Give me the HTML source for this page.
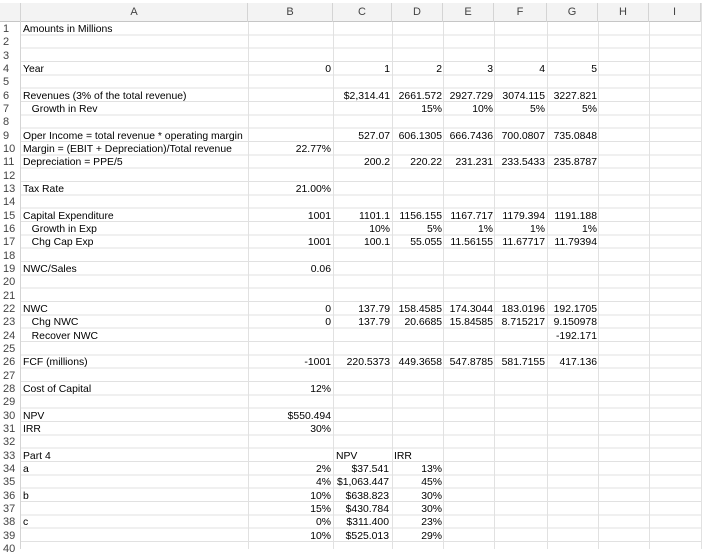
<!DOCTYPE html>
<html><head><meta charset="utf-8"><style>
*{margin:0;padding:0;box-sizing:border-box}
body{width:718px;height:549px;background:#fff;position:relative;overflow:hidden;font-family:"Liberation Sans",Arial,sans-serif;font-size:10.4px;color:#000}
#hdr{position:absolute;left:0;top:3px;width:701px;height:19px;background:#f3f3f3;border-bottom:1px solid #c6c6c6}
#hdr span{position:absolute;top:0;height:19px;line-height:19px;text-align:center;color:#444;font-size:11px;border-right:1px solid #d4d4d4}
#grid{position:absolute;left:0;top:22px;width:701px;height:527px;background:repeating-linear-gradient(to bottom,transparent 0,transparent 12.33px,#e1e1e1 12.33px,#e1e1e1 13.333px)}
.v{position:absolute;top:3px;height:546px;width:1px;background:#e1e1e1}
#rowcol{position:absolute;left:0;top:22px;width:21px;height:527px;background:#fff;border-right:1px solid #d4d4d4}
.row{position:absolute;left:0;width:701px;height:13.333px;line-height:15px;white-space:nowrap}
.row span{position:absolute;top:0;height:13px}
.n{left:3px;width:18px;color:#444;font-size:11px}
.a{left:23px}
.b{left:248px;width:83px;text-align:right}
.c{left:333px;width:57px;text-align:right}
.d{left:392px;width:50px;text-align:right}
.e{left:443px;width:50px;text-align:right}
.f{left:494px;width:51px;text-align:right}
.g{left:547px;width:50px;text-align:right}
</style></head><body>
<div id="grid"></div>
<div class="v" style="left:248px"></div>
<div class="v" style="left:333px"></div>
<div class="v" style="left:392px"></div>
<div class="v" style="left:443px"></div>
<div class="v" style="left:494px"></div>
<div class="v" style="left:547px"></div>
<div class="v" style="left:598px"></div>
<div class="v" style="left:649px"></div>
<div class="v" style="left:701px"></div>
<div id="rowcol"></div>
<div id="hdr">
<span style="left:0;width:21px"></span>
<span style="left:21px;width:227px">A</span>
<span style="left:248px;width:85px">B</span>
<span style="left:333px;width:59px">C</span>
<span style="left:392px;width:51px">D</span>
<span style="left:443px;width:51px">E</span>
<span style="left:494px;width:53px">F</span>
<span style="left:547px;width:51px">G</span>
<span style="left:598px;width:51px">H</span>
<span style="left:649px;width:52px">I</span>
</div>
<div class="row" style="top:22px"><span class="n">1</span><span class="a">Amounts in Millions</span></div>
<div class="row" style="top:35.33px"><span class="n">2</span></div>
<div class="row" style="top:48.67px"><span class="n">3</span></div>
<div class="row" style="top:62px"><span class="n">4</span><span class="a">Year</span><span class="b">0</span><span class="c">1</span><span class="d">2</span><span class="e">3</span><span class="f">4</span><span class="g">5</span></div>
<div class="row" style="top:75.33px"><span class="n">5</span></div>
<div class="row" style="top:88.67px"><span class="n">6</span><span class="a">Revenues (3% of the total revenue)</span><span class="c">$2,314.41</span><span class="d">2661.572</span><span class="e">2927.729</span><span class="f">3074.115</span><span class="g">3227.821</span></div>
<div class="row" style="top:102px"><span class="n">7</span><span class="a">&nbsp;&nbsp;&nbsp;Growth in Rev</span><span class="d">15%</span><span class="e">10%</span><span class="f">5%</span><span class="g">5%</span></div>
<div class="row" style="top:115.33px"><span class="n">8</span></div>
<div class="row" style="top:128.67px"><span class="n">9</span><span class="a">Oper Income = total revenue * operating margin</span><span class="c">527.07</span><span class="d">606.1305</span><span class="e">666.7436</span><span class="f">700.0807</span><span class="g">735.0848</span></div>
<div class="row" style="top:142px"><span class="n">10</span><span class="a">Margin = (EBIT + Depreciation)/Total revenue</span><span class="b">22.77%</span></div>
<div class="row" style="top:155.33px"><span class="n">11</span><span class="a">Depreciation = PPE/5</span><span class="c">200.2</span><span class="d">220.22</span><span class="e">231.231</span><span class="f">233.5433</span><span class="g">235.8787</span></div>
<div class="row" style="top:168.67px"><span class="n">12</span></div>
<div class="row" style="top:182px"><span class="n">13</span><span class="a">Tax Rate</span><span class="b">21.00%</span></div>
<div class="row" style="top:195.33px"><span class="n">14</span></div>
<div class="row" style="top:208.67px"><span class="n">15</span><span class="a">Capital Expenditure</span><span class="b">1001</span><span class="c">1101.1</span><span class="d">1156.155</span><span class="e">1167.717</span><span class="f">1179.394</span><span class="g">1191.188</span></div>
<div class="row" style="top:222px"><span class="n">16</span><span class="a">&nbsp;&nbsp;&nbsp;Growth in Exp</span><span class="c">10%</span><span class="d">5%</span><span class="e">1%</span><span class="f">1%</span><span class="g">1%</span></div>
<div class="row" style="top:235.33px"><span class="n">17</span><span class="a">&nbsp;&nbsp;&nbsp;Chg Cap Exp</span><span class="b">1001</span><span class="c">100.1</span><span class="d">55.055</span><span class="e">11.56155</span><span class="f">11.67717</span><span class="g">11.79394</span></div>
<div class="row" style="top:248.67px"><span class="n">18</span></div>
<div class="row" style="top:262px"><span class="n">19</span><span class="a">NWC/Sales</span><span class="b">0.06</span></div>
<div class="row" style="top:275.33px"><span class="n">20</span></div>
<div class="row" style="top:288.67px"><span class="n">21</span></div>
<div class="row" style="top:302px"><span class="n">22</span><span class="a">NWC</span><span class="b">0</span><span class="c">137.79</span><span class="d">158.4585</span><span class="e">174.3044</span><span class="f">183.0196</span><span class="g">192.1705</span></div>
<div class="row" style="top:315.33px"><span class="n">23</span><span class="a">&nbsp;&nbsp;&nbsp;Chg NWC</span><span class="b">0</span><span class="c">137.79</span><span class="d">20.6685</span><span class="e">15.84585</span><span class="f">8.715217</span><span class="g">9.150978</span></div>
<div class="row" style="top:328.67px"><span class="n">24</span><span class="a">&nbsp;&nbsp;&nbsp;Recover NWC</span><span class="g">-192.171</span></div>
<div class="row" style="top:342px"><span class="n">25</span></div>
<div class="row" style="top:355.33px"><span class="n">26</span><span class="a">FCF (millions)</span><span class="b">-1001</span><span class="c">220.5373</span><span class="d">449.3658</span><span class="e">547.8785</span><span class="f">581.7155</span><span class="g">417.136</span></div>
<div class="row" style="top:368.67px"><span class="n">27</span></div>
<div class="row" style="top:382px"><span class="n">28</span><span class="a">Cost of Capital</span><span class="b">12%</span></div>
<div class="row" style="top:395.33px"><span class="n">29</span></div>
<div class="row" style="top:408.67px"><span class="n">30</span><span class="a">NPV</span><span class="b">$550.494</span></div>
<div class="row" style="top:422px"><span class="n">31</span><span class="a">IRR</span><span class="b">30%</span></div>
<div class="row" style="top:435.33px"><span class="n">32</span></div>
<div class="row" style="top:448.67px"><span class="n">33</span><span class="a">Part 4</span><span style="left:336px">NPV</span><span style="left:394px">IRR</span></div>
<div class="row" style="top:462px"><span class="n">34</span><span class="a">a</span><span class="b">2%</span><span class="c" style="width:56px">$37.541</span><span class="d">13%</span></div>
<div class="row" style="top:475.33px"><span class="n">35</span><span class="b">4%</span><span class="c" style="width:56px">$1,063.447</span><span class="d">45%</span></div>
<div class="row" style="top:488.67px"><span class="n">36</span><span class="a">b</span><span class="b">10%</span><span class="c" style="width:56px">$638.823</span><span class="d">30%</span></div>
<div class="row" style="top:502px"><span class="n">37</span><span class="b">15%</span><span class="c" style="width:56px">$430.784</span><span class="d">30%</span></div>
<div class="row" style="top:515.33px"><span class="n">38</span><span class="a">c</span><span class="b">0%</span><span class="c" style="width:56px">$311.400</span><span class="d">23%</span></div>
<div class="row" style="top:528.67px"><span class="n">39</span><span class="b">10%</span><span class="c" style="width:56px">$525.013</span><span class="d">29%</span></div>
<div class="row" style="top:542px"><span class="n">40</span></div>
</body></html>
